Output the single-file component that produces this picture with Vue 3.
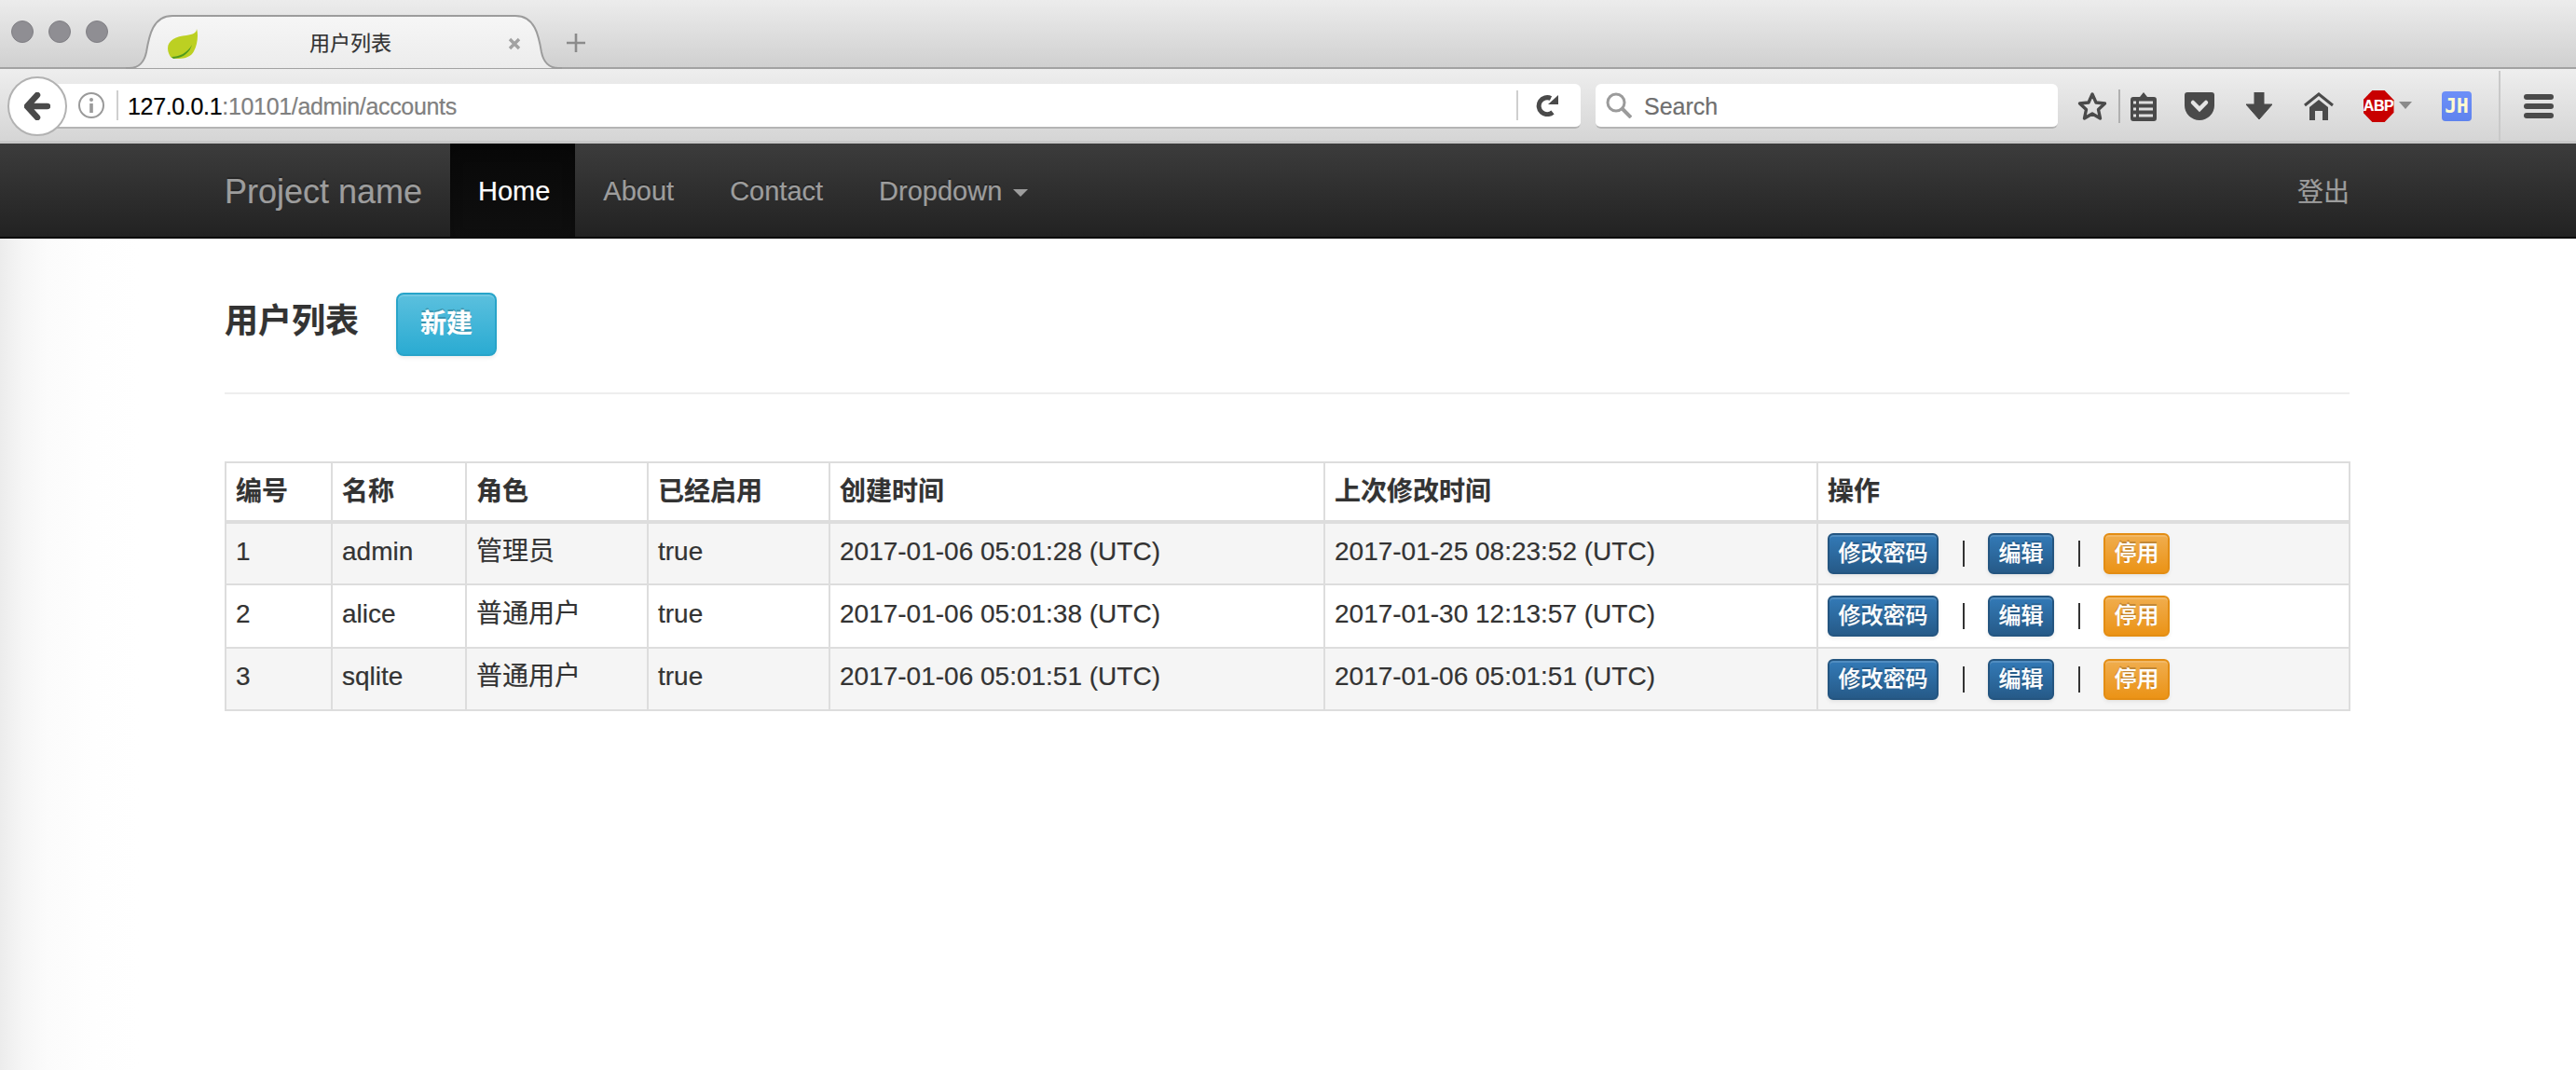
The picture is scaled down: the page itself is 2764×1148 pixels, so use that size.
<script setup>
const cols = [
  { label: '编号', width: 114 },
  { label: '名称', width: 144 },
  { label: '角色', width: 195 },
  { label: '已经启用', width: 195 },
  { label: '创建时间', width: 531 },
  { label: '上次修改时间', width: 529 },
  { label: '操作', width: 571 }
]
const users = [
  { id: 1, name: 'admin', role: '管理员', enabled: 'true', created: '2017-01-06 05:01:28 (UTC)', updated: '2017-01-25 08:23:52 (UTC)' },
  { id: 2, name: 'alice', role: '普通用户', enabled: 'true', created: '2017-01-06 05:01:38 (UTC)', updated: '2017-01-30 12:13:57 (UTC)' },
  { id: 3, name: 'sqlite', role: '普通用户', enabled: 'true', created: '2017-01-06 05:01:51 (UTC)', updated: '2017-01-06 05:01:51 (UTC)' }
]
const navItems = [
  { label: 'Home', active: true },
  { label: 'About' },
  { label: 'Contact' },
  { label: 'Dropdown', caret: true }
]
</script>

<template>
  <div class="page">
    <header class="tabstrip">
      <div class="lights"><i></i><i></i><i></i></div>
      <div class="tab">
        <svg class="tab-shape" viewBox="0 0 468 58" preserveAspectRatio="none">
          <defs>
            <linearGradient id="tabfill" x1="0" y1="0" x2="0" y2="1">
              <stop offset="0" stop-color="#f6f6f6" />
              <stop offset="1" stop-color="#ececec" />
            </linearGradient>
          </defs>
          <path d="M0 57 H4 C14 57 20 50 22 40 C25 22 29 1 50 1 H418 C439 1 443 22 446 40 C448 50 454 57 464 57 H468" fill="url(#tabfill)" stroke="#9c9c9c" stroke-width="2" />
        </svg>
        <svg class="leaf" viewBox="0 0 32 32">
          <path d="M31 0 C31 4 27 6 20 7 C9 8 0 12 0 21 C0 25 2 29 4 31 C13 33 24 32 28 24 C32 17 33 6 31 0Z" fill="#bcd022" />
          <path d="M4 30 C12 30 21 26 26 17 C24 24 18 31 6 32Z" fill="#4f9a1f" />
        </svg>
        <span class="tab-title">用户列表</span>
        <svg class="tab-close" viewBox="0 0 14 14"><path d="M2 2 12 12M12 2 2 12" stroke="#a2a2a2" stroke-width="3.4" /></svg>
      </div>
      <svg class="tab-new" viewBox="0 0 20 20"><path d="M10 0V20M0 10H20" stroke="#8b8b8b" stroke-width="2.6" /></svg>
    </header>

    <div class="toolbar">
      <button class="back">
        <svg viewBox="0 0 28 30" width="28" height="30"><path d="M14 3 3 15 14 27M5 15H25" fill="none" stroke="#4a4a4a" stroke-width="6.500" stroke-linejoin="round" stroke-linecap="round" /></svg>
      </button>
      <div class="urlbar">
        <svg class="info" viewBox="0 0 28 28" width="28" height="28">
          <circle cx="14" cy="14" r="13" fill="none" stroke="#9a9a9a" stroke-width="2" />
          <circle cx="14" cy="8" r="2" fill="#9a9a9a" />
          <rect x="12.2" y="12" width="3.6" height="10" fill="#9a9a9a" />
        </svg>
        <span class="vsep url-sep"></span>
        <span class="url"><b>127.0.0.1</b>:10101/admin/accounts</span>
        <span class="vsep reload-sep"></span>
        <svg class="reload" viewBox="0 0 24 24" width="24" height="24">
          <path d="M18 19.5 A9 9 0 1 1 16 4.5" fill="none" stroke="#4a4a4a" stroke-width="5" />
          <path d="M13 11 24 1V11Z" fill="#4a4a4a" />
        </svg>
      </div>
      <div class="searchbar">
        <svg viewBox="0 0 28 28" width="28" height="28">
          <circle cx="11" cy="11" r="9" fill="none" stroke="#9b9b9b" stroke-width="3" />
          <path d="M17 17 27 27" stroke="#9b9b9b" stroke-width="4" />
        </svg>
        <span class="search-label">Search</span>
      </div>
      <div class="tools">
        <svg class="star" viewBox="0 0 32 32" width="32" height="32"><path d="M16 3 20 12 29.5 13 22.5 19.5 24.5 29 16 24 7.5 29 9.5 19.500 2.500 13 12 12Z" fill="none" stroke="#4a4a4a" stroke-width="3.400" stroke-linejoin="round" /></svg>
        <span class="vsep tool-sep"></span>
        <span class="tool reader">
          <svg viewBox="0 0 28 32" width="28" height="32">
            <path d="M3 6H10L14 1 18 6H25A3 3 0 0 1 28 9V29A3 3 0 0 1 25 32H3A3 3 0 0 1 0 29V9A3 3 0 0 1 3 6Z" fill="#4a4a4a" />
            <path d="M9 12H24M9 19H24M9 26H24" stroke="#dedede" stroke-width="3" />
            <path d="M3 12H6M3 19H6M3 26H6" stroke="#dedede" stroke-width="3" />
          </svg>
        </span>
        <span class="tool pocket">
          <svg viewBox="0 0 32 30" width="32" height="30">
            <path d="M3 0H29A3 3 0 0 1 32 3V14A16 16 0 0 1 0 14V3A3 3 0 0 1 3 0Z" fill="#4a4a4a" />
            <path d="M9 11 16 18 23 11" fill="none" stroke="#e4e4e4" stroke-width="4.500" stroke-linecap="round" />
          </svg>
        </span>
        <span class="tool">
          <svg viewBox="0 0 28 30" width="28" height="30"><path d="M9 0H19V13H28L14 29 0 13H9Z" fill="#4a4a4a" stroke="#4a4a4a" stroke-linejoin="round" /></svg>
        </span>
        <span class="tool">
          <svg viewBox="0 0 32 30" width="32" height="30">
            <path d="M1 14 16 2 31 14" fill="none" stroke="#4a4a4a" stroke-width="3" />
            <path d="M6 16 16 8 26 16V30H20V20H12V30H6Z" fill="#4a4a4a" />
          </svg>
        </span>
        <span class="tool abp">
          <span class="abp-sign">ABP</span>
          <i class="abp-caret"></i>
        </span>
        <span class="tool jh">JH</span>
        <span class="tool-divider"></span>
        <span class="burger"><i></i><i></i><i></i></span>
      </div>
    </div>

    <nav class="navbar">
      <div class="nav-inner">
        <a class="brand">Project name</a>
        <ul class="nav-list">
          <li v-for="item in navItems" :key="item.label" :class="{ active: item.active }">
            {{ item.label }}<i v-if="item.caret" class="caret"></i>
          </li>
        </ul>
        <a class="logout">登出</a>
      </div>
    </nav>

    <main class="content">
      <div class="title-row">
        <h3>用户列表</h3>
        <button class="btn btn-info btn-new">新建</button>
      </div>
      <hr />
      <table>
        <colgroup><col v-for="c in cols" :key="c.label" :style="{ width: c.width + 'px' }" /></colgroup>
        <thead>
          <tr><th v-for="c in cols" :key="c.label">{{ c.label }}</th></tr>
        </thead>
        <tbody>
          <tr v-for="u in users" :key="u.id">
            <td>{{ u.id }}</td>
            <td>{{ u.name }}</td>
            <td>{{ u.role }}</td>
            <td>{{ u.enabled }}</td>
            <td>{{ u.created }}</td>
            <td>{{ u.updated }}</td>
            <td class="action-cell">
              <div class="actions">
                <button class="btn btn-xs btn-primary">修改密码</button>
                <span class="pipe"></span>
                <button class="btn btn-xs btn-primary">编辑</button>
                <span class="pipe"></span>
                <button class="btn btn-xs btn-warning">停用</button>
              </div>
            </td>
          </tr>
        </tbody>
      </table>
    </main>
  </div>
</template>

<style>
html, body { margin: 0; background: #fff; }
</style>

<style scoped>
.page {
  width: 2764px;
  height: 1148px;
  overflow: hidden;
  display: flex;
  flex-direction: column;
  font-family: "Liberation Sans", "Noto Sans CJK SC", sans-serif;
  color: #333;
  -webkit-text-stroke: 0.2px;
}
button { font-family: inherit; }

.tabstrip {
  height: 74px;
  box-sizing: border-box;
  display: flex;
  align-items: flex-start;
  background: linear-gradient(#ececec, #d0d0d0);
  border-bottom: 2px solid #a2a2a2;
}
.lights { display: flex; gap: 16px; padding: 22px 0 0 12px; }
.lights i {
  width: 24px; height: 24px; border-radius: 50%;
  background: #8f8e93; box-sizing: border-box; border: 1px solid #807f84;
}
.tab {
  position: relative;
  width: 468px;
  height: 58px;
  box-sizing: border-box;
  padding-top: 3px;
  margin: 16px 0 0 19px;
  display: flex;
  align-items: center;
}
.tab-shape { position: absolute; inset: 0; width: 100%; height: 100%; }
.leaf { position: relative; width: 32px; height: 32px; margin: 0 0 0 45px; }
.tab-title {
  position: relative;
  font-size: 22px;
  margin-left: 120px;
  color: #333;
  line-height: 30px;
}
.tab-close { position: relative; width: 14px; height: 14px; margin-left: 125px; }
.tab-new { width: 20px; height: 20px; margin: 36px 0 0 5px; }

.toolbar {
  height: 80px;
  box-sizing: border-box;
  display: flex;
  align-items: center;
  padding: 3px 0 0 8px;
  background: linear-gradient(#eeeeee, #d5d5d5);
  border-bottom: 3px solid #c8c8c8;
}
.back {
  position: relative;
  z-index: 1;
  flex: none;
  width: 64px;
  height: 64px;
  padding: 0;
  border-radius: 50%;
  border: 2px solid #b2b2b2;
  background: #fff;
  display: flex;
  align-items: center;
  justify-content: center;
}
.urlbar {
  margin-left: -28px;
  width: 1652px;
  height: 48px;
  box-sizing: border-box;
  background: #fff;
  border-bottom: 2px solid #b4b4b4;
  border-radius: 0 6px 6px 0;
  display: flex;
  align-items: center;
  padding-left: 40px;
}
.info { flex: none; }
.vsep { flex: none; width: 2px; height: 32px; background: #cfcfcf; }
.url-sep { margin-left: 13px; }
.url {
  font-size: 25px;
  letter-spacing: -0.33px;
  color: #808080;
  margin-left: 10px;
  padding-top: 3px;
  white-space: nowrap;
}
.url b { font-weight: 400; color: #000; }
.reload-sep { margin-left: auto; }
.reload { flex: none; margin: 0 24px 0 19px; }
.searchbar {
  margin-left: 16px;
  width: 496px;
  height: 48px;
  box-sizing: border-box;
  background: #fff;
  border-bottom: 2px solid #b4b4b4;
  border-radius: 6px;
  display: flex;
  align-items: center;
  padding-left: 11px;
  gap: 13px;
  font-size: 25px;
  color: #6f6f6f;
}
.search-label { padding-top: 3px; }
.tools { display: flex; align-items: center; height: 100%; margin-left: 21px; flex: 1; }
.star { flex: none; }
.tool-sep { height: 36px; background: #b0b0b0; margin-left: 12px; }
.tool { flex: none; width: 64px; display: flex; justify-content: center; align-items: center; }
.reader { margin-left: -7px; }
.pocket { margin-left: -4px; }
.abp { position: relative; }
.abp-sign {
  width: 33px; height: 34px;
  background: #c80000;
  clip-path: polygon(30% 0, 70% 0, 100% 30%, 100% 70%, 70% 100%, 30% 100%, 0 70%, 0 30%);
  color: #fff; font-size: 16px; font-weight: 700; line-height: 34px; text-align: center;
  letter-spacing: -0.5px;
}
.abp-caret {
  position: absolute; left: 54px; top: 50%; margin-top: -5px;
  border: 7px solid transparent; border-top: 8px solid #8a8a8a; border-bottom: 0;
}
.jh {
  width: 32px; height: 32px; margin-left: 36px;
  background: linear-gradient(#6d8ff8, #5f83ee);
  border-radius: 4px;
  color: #fffad0; font-family: "DejaVu Sans Mono", monospace; font-weight: 700; font-size: 21px;
}
.tool-divider { flex: none; width: 2px; height: 77px; background: #c9c9c9; margin-left: 29px; }
.burger { display: flex; flex-direction: column; gap: 4px; margin-left: 25px; }
.burger i { width: 32px; height: 6px; border-radius: 3px; background: #4a4a4a; }

.navbar {
  height: 102px;
  box-sizing: border-box;
  background: linear-gradient(#3c3c3c, #222222);
  border-bottom: 2px solid #080808;
}
.nav-inner {
  margin-left: 241px;
  width: 2280px;
  height: 100px;
  display: flex;
  align-items: center;
}
.brand {
  font-size: 36px;
  padding-top: 4px;
  color: #9d9d9d;
  width: 242px;
  text-shadow: 0 -2px 0 rgba(0,0,0,.25);
}
.nav-list { list-style: none; margin: 0; padding: 0; display: flex; height: 100%; }
.nav-list li {
  padding: 0 30px;
  font-size: 29px;
  line-height: 103px;
  color: #9d9d9d;
  text-shadow: 0 -2px 0 rgba(0,0,0,.25);
}
.nav-list li.active {
  color: #fff;
  padding-right: 27px;
  background: linear-gradient(#080808, #0f0f0f);
  box-shadow: inset 0 6px 14px rgba(0,0,0,.25);
}
.caret {
  display: inline-block;
  margin-left: 12px;
  vertical-align: middle;
  border-top: 8px solid #9d9d9d;
  border-left: 8px solid transparent;
  border-right: 8px solid transparent;
}
.logout { margin-left: auto; font-size: 28px; color: #9d9d9d; }

.content {
  flex: 1;
  padding: 0 243px 0 241px;
  background: linear-gradient(to right, #ececec, #f6f6f6 25px, #fbfbfb 50px, #fefefe 100px, #ffffff 150px);
}
.title-row { display: flex; align-items: flex-start; padding-top: 58px; height: 107px; }
h3 { margin: 11px 0 0; font-size: 36px; font-weight: 700; line-height: 40px; color: #333; }
.btn {
  box-sizing: border-box;
  color: #fff;
  border: 2px solid;
  font-size: 28px;
  font-weight: 700;
  line-height: 40px;
  text-shadow: 0 -2px 0 rgba(0,0,0,.2);
  box-shadow: inset 0 2px 0 rgba(255,255,255,.15), 0 2px 4px rgba(0,0,0,.075);
  padding: 0;
}
.btn-new {
  width: 108px;
  height: 68px;
  margin-left: 40px;
  border-radius: 8px;
}
.btn-xs {
  font-size: 24px;
  font-weight: 500;
  line-height: 36px;
  height: 44px;
  padding: 2px 9.5px;
  border-radius: 6px;
  white-space: nowrap;
}
.btn-info { background: linear-gradient(#5bc0de, #2aabd2); border-color: #28a4c9; }
.btn-primary { background: linear-gradient(#337ab7, #265a88); border-color: #245580; }
.btn-warning { background: linear-gradient(#f0ad4e, #eb9316); border-color: #e38d13; }
hr { margin: 0; border: 0; border-top: 2px solid #eeeeee; }
table {
  margin-top: 72px;
  width: 2279px;
  table-layout: fixed;
  border-collapse: collapse;
  font-size: 28px;
  line-height: 40px;
}
th, td { border: 2px solid #dddddd; padding: 0 10px; text-align: left; }
th { height: 61px; font-weight: 700; border-bottom-width: 4px; }
td { height: 67px; padding-bottom: 5px; box-sizing: border-box; }
tbody tr:nth-child(2) td { height: 68px; }
.action-cell { padding-bottom: 0; }
tbody tr:nth-child(odd) td { background: #f5f5f5; }
.actions { display: flex; align-items: center; }
.pipe { width: 2px; height: 28px; background: #333; margin: 0 25.5px; }
</style>
